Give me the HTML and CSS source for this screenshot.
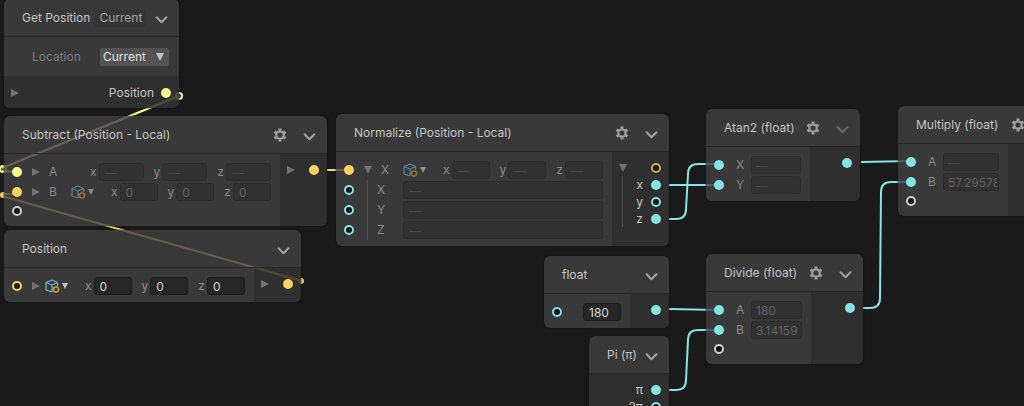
FILE: index.html
```html
<!DOCTYPE html>
<html lang="en">
<head>
<meta charset="utf-8">
<title>Node graph</title>
<link rel="stylesheet" href="styles.css">
</head>
<body>
<svg class="defs" aria-hidden="true">
  <symbol id="chevron" viewBox="0 0 12 12"><path d="M1.500 4 6 8.500l4.500-4.500" fill="none" stroke="currentColor" stroke-width="2" stroke-linecap="round" stroke-linejoin="round"/></symbol>
  <symbol id="gear" viewBox="0 0 14 14"><g fill="none" stroke="currentColor"><circle cx="7" cy="7" r="3.700" stroke-width="2.200"/><path d="M7 .6v2M7 11.400v2M1.500 3.800l1.700 1M10.800 9.200l1.700 1M1.500 10.200l1.700-1M10.800 4.800l1.700-1" stroke-width="3"/></g></symbol>
  <symbol id="right" viewBox="0 0 8 8"><path d="M0 0 8 4 0 8z" fill="currentColor"/></symbol>
  <symbol id="down" viewBox="0 0 8 8"><path d="M0 0h8L4 8z" fill="currentColor"/></symbol>
  <symbol id="cube" viewBox="0 0 15 14"><path d="M7 13 1 11V3.500L7 1l5.500 2.500V7M1 3.500 7 6l5.500-2.500M7 6v7" fill="none" stroke="#69b9df" stroke-width="1.200" stroke-linejoin="round"/><circle cx="11" cy="10.500" r="2.500" fill="#332b1e" stroke="#d39c2a" stroke-width="1.600"/></symbol>
</svg>
<main class="graph">
  <svg class="wires" aria-hidden="true">
    <g class="lemon"><path d="M179 96 2 168M2 171 17 172"/><circle cx="179" cy="96" r="3"/><circle cx="3" cy="169" r="3"/></g>
    <g class="gold"><path d="M302 281 2 196M2 194h15M327 170h22"/><circle cx="301" cy="281" r="2"/><circle cx="3" cy="195" r="2"/></g>
    <g class="cyan">
      <path d="M669 185h49M669 219h7q10 0 10-10L688 174q0-10 10-10h20"/>
      <path d="M861 162 911 161M863 308h7q10 0 10-10L881 192q0-10 10-10h20"/>
      <path d="M669 309 718 310M669 390h7q10 0 10-10L688 340q0-10 10-10h20"/>
    </g>
  </svg>

  <section class="node get-position">
    <header><h2>Get Position</h2><span class="tag">Current</span><button class="fold" aria-label="Collapse"><svg><use href="#chevron"/></svg></button></header>
    <div class="option"><label for="location">Location</label><span class="picker"><select id="location"><option>Current</option></select><svg><use href="#down"/></svg></span></div>
    <div class="result"><svg class="tri"><use href="#right"/></svg><span>Position</span><i class="port lemon on"></i></div>
  </section>

  <section class="node subtract">
    <header><h2>Subtract (Position - Local)</h2><button class="gear" aria-label="Settings"><svg><use href="#gear"/></svg></button><button class="fold" aria-label="Collapse"><svg><use href="#chevron"/></svg></button></header>
    <div class="body">
      <div class="inputs">
        <div class="row"><i class="port lemon on"></i><svg class="tri"><use href="#right"/></svg><span class="name">A</span>
          <div class="vector wide"><label>x<input disabled value="—"></label><label>y<input disabled value="—"></label><label>z<input disabled value="—"></label></div></div>
        <div class="row"><i class="port gold on"></i><svg class="tri"><use href="#right"/></svg><span class="name">B</span><button class="space dim" aria-label="Space"><svg class="cube"><use href="#cube"/></svg><svg class="caret"><use href="#down"/></svg></button>
          <div class="vector"><label>x<input disabled value="0"></label><label>y<input disabled value="0"></label><label>z<input disabled value="0"></label></div></div>
        <div class="row short"><i class="port white"></i></div>
      </div>
      <div class="outputs"><div class="out"><svg class="tri"><use href="#right"/></svg><i class="port gold on"></i></div></div>
    </div>
  </section>

  <section class="node position">
    <header><h2>Position</h2><button class="fold" aria-label="Collapse"><svg><use href="#chevron"/></svg></button></header>
    <div class="body">
      <div class="inputs">
        <div class="row"><i class="port gold"></i><svg class="tri"><use href="#right"/></svg><button class="space" aria-label="Space"><svg class="cube"><use href="#cube"/></svg><svg class="caret"><use href="#down"/></svg></button>
          <div class="vector"><label>x<input value="0"></label><label>y<input value="0"></label><label>z<input value="0"></label></div></div>
      </div>
      <div class="outputs"><div class="out"><svg class="tri"><use href="#right"/></svg><i class="port gold on"></i></div></div>
    </div>
  </section>

  <section class="node normalize">
    <header><h2>Normalize (Position - Local)</h2><button class="gear" aria-label="Settings"><svg><use href="#gear"/></svg></button><button class="fold" aria-label="Collapse"><svg><use href="#chevron"/></svg></button></header>
    <div class="body">
      <div class="inputs">
        <div class="row"><i class="port gold on"></i><svg class="tri"><use href="#down"/></svg><span class="name">X</span><button class="space dim" aria-label="Space"><svg class="cube"><use href="#cube"/></svg><svg class="caret"><use href="#down"/></svg></button>
          <div class="vector"><label>x<input disabled value="—"></label><label>y<input disabled value="—"></label><label>z<input disabled value="—"></label></div></div>
        <div class="row child"><i class="port cyan"></i><label><span>X</span><input disabled value="—"></label></div>
        <div class="row child"><i class="port cyan"></i><label><span>Y</span><input disabled value="—"></label></div>
        <div class="row child"><i class="port cyan"></i><label><span>Z</span><input disabled value="—"></label></div>
      </div>
      <div class="outputs">
        <div class="out"><svg class="tri"><use href="#down"/></svg><i class="port pale"></i></div>
        <div class="out child"><span>x</span><i class="port cyan on"></i></div>
        <div class="out child"><span>y</span><i class="port cyan"></i></div>
        <div class="out child"><span>z</span><i class="port cyan on"></i></div>
      </div>
    </div>
  </section>

  <section class="node atan">
    <header><h2>Atan2 (float)</h2><button class="gear" aria-label="Settings"><svg><use href="#gear"/></svg></button><button class="fold" disabled aria-label="Collapse"><svg><use href="#chevron"/></svg></button></header>
    <div class="body">
      <div class="inputs">
        <div class="row scalar"><i class="port cyan on"></i><label><span>X</span><input disabled value="—"></label></div>
        <div class="row scalar"><i class="port cyan on"></i><label><span>Y</span><input disabled value="—"></label></div>
      </div>
      <div class="outputs"><div class="out"><i class="port cyan on"></i></div></div>
    </div>
  </section>

  <section class="node multiply">
    <header><h2>Multiply (float)</h2><button class="gear" aria-label="Settings"><svg><use href="#gear"/></svg></button><button class="fold" aria-label="Collapse"><svg><use href="#chevron"/></svg></button></header>
    <div class="body">
      <div class="inputs">
        <div class="row scalar"><i class="port cyan on"></i><label><span>A</span><input disabled value="—"></label></div>
        <div class="row scalar"><i class="port cyan on"></i><label><span>B</span><input disabled value="57.29578"></label></div>
        <div class="row short"><i class="port white"></i></div>
      </div>
      <div class="outputs"><div class="out"><i class="port cyan on"></i></div></div>
    </div>
  </section>

  <section class="node float">
    <header><h2>float</h2><button class="fold" aria-label="Collapse"><svg><use href="#chevron"/></svg></button></header>
    <div class="body">
      <div class="inputs"><div class="row"><i class="port cyan"></i><div class="vector"><input aria-label="float value" value="180"></div></div></div>
      <div class="outputs"><div class="out"><i class="port cyan on"></i></div></div>
    </div>
  </section>

  <section class="node pi">
    <header><h2>Pi (π)</h2><button class="fold" aria-label="Collapse"><svg><use href="#chevron"/></svg></button></header>
    <div class="body">
      <div class="outputs">
        <div class="out"><span>π</span><i class="port cyan on"></i></div>
        <div class="out"><span>2π</span><i class="port cyan"></i></div>
      </div>
    </div>
  </section>

  <section class="node divide">
    <header><h2>Divide (float)</h2><button class="gear" aria-label="Settings"><svg><use href="#gear"/></svg></button><button class="fold" aria-label="Collapse"><svg><use href="#chevron"/></svg></button></header>
    <div class="body">
      <div class="inputs">
        <div class="row scalar"><i class="port cyan on"></i><label><span>A</span><input disabled value="180"></label></div>
        <div class="row scalar"><i class="port cyan on"></i><label><span>B</span><input disabled value="3.14159"></label></div>
        <div class="row short"><i class="port white"></i></div>
      </div>
      <div class="outputs"><div class="out"><i class="port cyan on"></i></div></div>
    </div>
  </section>
</main>
</body>
</html>
```
FILE: styles.css
```css
* { box-sizing: border-box; }
body { margin: 0; background: #1a1a1a; color: #c4c4c4; font: 12px/16px Inter, "Liberation Sans", sans-serif; }
svg { display: block; flex: none; }
button { border: 0; padding: 0; background: none; color: #a0a0a0; }
button:disabled { color: #666; }
.defs { position: absolute; width: 0; height: 0; }
.graph { position: relative; height: 100vh; overflow: hidden; }
.lemon { --c: #fbfb8d; }
.gold { --c: #fbd160; }
.cyan { --c: #84e4e7; }
.white { --c: #cfcfcf; }
.pale { --c: #c9b35e; }
.wires { position: absolute; inset: 0; width: 100%; height: 100%; fill: none; stroke-width: 2; }
.wires g { stroke: var(--c); }

/* Nodes sit at free positions on the canvas */
.node { position: absolute; border-radius: 6px; background: rgba(65, 65, 65, .8); box-shadow: 0 0 2px #111; overflow: hidden; }
.get-position { left: 4px; top: -1px; width: 175px; }
.subtract { left: 4px; top: 116px; width: 323px; --out: 47px; }
.position { left: 4px; top: 230px; width: 297px; --out: 47px; }
.normalize { left: 336px; top: 114px; width: 333px; --out: 57px; }
.atan { left: 706px; top: 109px; width: 154px; --out: 50px; }
.multiply { left: 898px; top: 106px; width: 167px; --out: 57px; }
.float { left: 544px; top: 256px; width: 125px; --out: 39px; }
.pi { left: 589px; top: 336px; width: 80px; --out: 80px; }
.divide { left: 706px; top: 254px; width: 157px; --out: 52px; }

header { display: flex; align-items: center; height: 38px; padding: 0 11px 0 18px; border-bottom: 1px solid #292929; }
h2 { margin: 0; font-size: 12px; font-weight: 400; white-space: nowrap; }
.tag { margin-left: 5px; padding: 1px 4px; border-radius: 3px; background: #353535; color: #a4a4a4; }
.fold { margin-left: auto; padding-top: 3px; }
.fold svg { width: 13px; height: 13px; }
.gear { margin-left: auto; }
.gear svg { width: 14px; height: 14px; }
.gear + .fold { margin-left: 16px; }

.option { display: flex; align-items: center; justify-content: space-between; height: 40px; padding: 0 10px 0 28px; color: #7b7b7b; border-bottom: 1px solid #2e2e2e; }
.picker { position: relative; width: 69px; }
.picker svg { position: absolute; right: 5px; top: 5px; width: 8px; height: 8px; color: #c4c4c4; }
select { width: 100%; height: 18px; padding: 0 3px; border: 0; border-radius: 2px; background: #535353; color: #e0e0e0; font: inherit; appearance: none; }
.result { display: flex; align-items: center; gap: 6px; height: 31px; padding: 0 7px; background: rgba(28, 28, 28, .3); }
.result span { margin-left: auto; }

.body { display: flex; }
.inputs { flex: 1; min-width: 0; padding: 8px 9px 6px 7px; }
.outputs { width: var(--out); padding: 7px 7px 6px; background: rgba(28, 28, 28, .3); }
.row { display: flex; align-items: center; height: 20px; color: #8a8a8a; }
.short { height: 18px; }
.out { display: flex; align-items: center; justify-content: flex-end; gap: 7px; height: 17px; }
.out .tri { margin-right: auto; }
.out.child { border-left: 1px solid #4c4c4c; margin-left: 3px; }

.port { flex: none; width: 10px; height: 10px; margin: 0 1px; border: 2px solid var(--c); border-radius: 50%; background: #161616; }
.port.on { background: var(--c); }
.tri { width: 8px; height: 8px; color: #727272; }
.row .tri { margin-left: 9px; }
.name { width: 22px; margin-left: 9px; }
.space { display: flex; align-items: center; gap: 2px; color: #c4c4c4; }
.tri + .space { margin-left: 5px; }
.space.dim { opacity: .6; }
.cube { width: 15px; height: 14px; }
.caret { width: 6px; height: 6px; }

input { width: 38px; height: 18px; padding: 0 5px; border: 1px solid #1d1d1d; border-radius: 3px; background: #272727; color: #d6d6d6; font: inherit; }
input:disabled { border-color: #2c2c2c; background: #323232; color: #606060; }
input[value="—"] { color: #474747; }
.vector { display: flex; margin-left: auto; }
.vector label { display: flex; align-items: center; }
.vector label input { margin-left: 2px; }
.vector label + label { margin-left: 10px; }
.wide input { width: 45px; }
.row > label { display: flex; flex: 1; min-width: 0; align-items: center; }
.row > label input { flex: 1; min-width: 0; }
.row.child > label { align-self: stretch; margin-left: 12px; padding-left: 9px; border-left: 1px solid #505050; }
.row.child span { width: 26px; }
.scalar > label { margin-left: 11px; }
.scalar span { width: 15px; }
.scalar input { padding: 0 1px 0 4px; }
```
